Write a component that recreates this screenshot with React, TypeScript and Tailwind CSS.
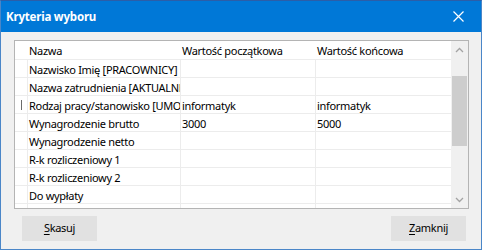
const font = { fontFamily: '"Noto Sans", "Liberation Sans", sans-serif' }

const rows: [string, string, string][] = [
  ['Nazwisko Imię [PRACOWNICY]', '', ''],
  ['Nazwa zatrudnienia [AKTUALNE ZATRUDNIENIE]', '', ''],
  ['Rodzaj pracy/stanowisko [UMOWY]', 'informatyk', 'informatyk'],
  ['Wynagrodzenie brutto', '3000', '5000'],
  ['Wynagrodzenie netto', '', ''],
  ['R-k rozliczeniowy 1', '', ''],
  ['R-k rozliczeniowy 2', '', ''],
  ['Do wypłaty', '', ''],
  ['', '', ''],
]

function Chevron({ up }: { up?: boolean }) {
  return (
    <svg width="9" height="6" viewBox="0 0 9 6" className="block">
      <path
        d={up ? 'M1 5 L4.5 1.5 L8 5' : 'M1 1 L4.5 4.5 L8 1'}
        fill="none"
        stroke="#a3a3a3"
        strokeWidth="1.3"
      />
    </svg>
  )
}

function App() {
  return (
    <div
      className="w-[482px] h-[250px] flex flex-col border border-[#4a86c8] border-t-[#2b5ea8] text-[11px] tracking-[-0.3px] text-black"
      style={font}
    >
      {/* title bar */}
      <div className="h-[31px] bg-[#0078d7] flex items-center justify-between pl-[5px] pr-[17px] shrink-0">
        <span className="text-white font-bold text-[11.5px] tracking-[-0.2px]">Kryteria wyboru</span>
        <svg width="11" height="11" viewBox="0 0 11 11">
          <path d="M0.5 0.5 L10.5 10.5 M10.5 0.5 L0.5 10.5" stroke="#fff" strokeWidth="1.2" />
        </svg>
      </div>

      <div className="flex-1 bg-[#f0f0f0] flex flex-col pl-[13px] pr-[12px] pt-[8px]">
        {/* grid */}
        <div className="h-[169px] border border-[#b4b4b4] bg-white flex">
          <div className="flex-1 flex flex-col overflow-hidden">
            <div className="h-[19px] shrink-0 flex border-b border-[#ececec]">
              <div className="w-[13px] shrink-0" />
              <div className="w-[153px] shrink-0 pl-[1px] leading-[20px]">Nazwa</div>
              <div className="w-[135px] shrink-0 pl-[1px] leading-[20px]">Wartość początkowa</div>
              <div className="flex-1 pl-[1px] leading-[20px]">Wartość końcowa</div>
            </div>
            {rows.map((r, i) => (
              <div key={i} className="h-[18px] shrink-0 flex border-b border-[#ececec]">
                <div className="w-[13px] shrink-0 border-r border-[#ececec] flex items-center justify-center">
                  {i === 2 && <div className="w-px h-[10px] bg-[#6b6b6b]" />}
                </div>
                <div className="w-[153px] shrink-0 pl-[1px] border-r border-[#ececec] whitespace-nowrap overflow-hidden leading-[19px]">
                  {r[0]}
                </div>
                <div className="w-[135px] shrink-0 pl-[1px] border-r border-[#ececec] whitespace-nowrap overflow-hidden leading-[19px]">
                  {r[1]}
                </div>
                <div className="flex-1 pl-[1px] whitespace-nowrap overflow-hidden leading-[19px]">{r[2]}</div>
              </div>
            ))}
          </div>
          {/* scrollbar */}
          <div className="w-[17px] shrink-0 bg-[#f0f0f0] flex flex-col items-center">
            <div className="h-[17px] w-full flex items-center justify-center">
              <Chevron up />
            </div>
            <div className="h-[18px]" />
            <div className="h-[70px] w-[15px] bg-[#cdcdcd]" />
            <div className="flex-1" />
            <div className="h-[17px] w-full flex items-center justify-center">
              <Chevron />
            </div>
          </div>
        </div>

        {/* buttons */}
        <div className="flex justify-between pl-[8px] pr-[3px] mt-[7px]">
          <button className="w-[75px] h-[25px] bg-[#e1e1e1] text-[11px]">
            <span className="underline underline-offset-2">S</span>kasuj
          </button>
          <button className="w-[75px] h-[25px] bg-[#e1e1e1] text-[11px]">
            <span className="underline underline-offset-2">Z</span>amknij
          </button>
        </div>
      </div>
    </div>
  )
}

export default App
